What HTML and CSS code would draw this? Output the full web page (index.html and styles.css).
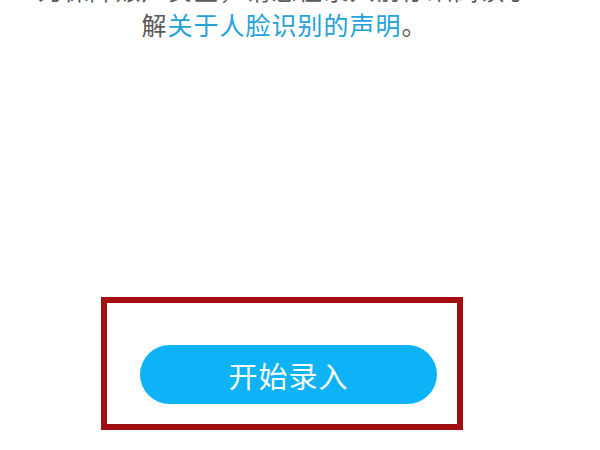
FILE: index.html
```html
<!DOCTYPE html>
<html lang="zh-CN">
<head>
<meta charset="utf-8">
<title>人脸录入</title>
<link rel="stylesheet" href="styles.css">
</head>
<body>
<div class="page">
  <div class="intro">
    <div class="line first">为保障账户安全，请您在录入前仔细阅读了</div>
    <div class="line">解<a class="link" href="#">关于人脸识别的声明</a>。</div>
  </div>
  <div class="highlight">
    <button class="start" type="button">开始录入</button>
  </div>
</div>
</body>
</html>
```
FILE: styles.css
```css
html, body {
  margin: 0;
  padding: 0;
  background: #ffffff;
}
.page {
  width: 600px;
  height: 450px;
  overflow: hidden;
  font-family: "Noto Sans CJK SC", "Noto Sans", sans-serif;
}
.intro {
  margin-top: -27px;
  padding-right: 31px;
  text-align: center;
  font-size: 25px;
  line-height: 32px;
  letter-spacing: 1px;
  color: #5a5a5a;
}
.line {
  white-space: nowrap;
}
.first {
  margin-bottom: 3px;
}
.link {
  color: #24a2d8;
  text-decoration: none;
}
.highlight {
  box-sizing: border-box;
  margin: 257px 0 0 101px;
  width: 362px;
  height: 133px;
  border: 6px solid #a20f12;
  padding: 42px 20px 20px 33px;
}
.start {
  display: block;
  width: 297px;
  height: 59px;
  border: none;
  border-radius: 30px;
  background: #0db3f6;
  color: #ffffff;
  font-family: "Noto Sans CJK SC", "Noto Sans", sans-serif;
  font-size: 29px;
  padding: 0;
  letter-spacing: 1px;
}
```
